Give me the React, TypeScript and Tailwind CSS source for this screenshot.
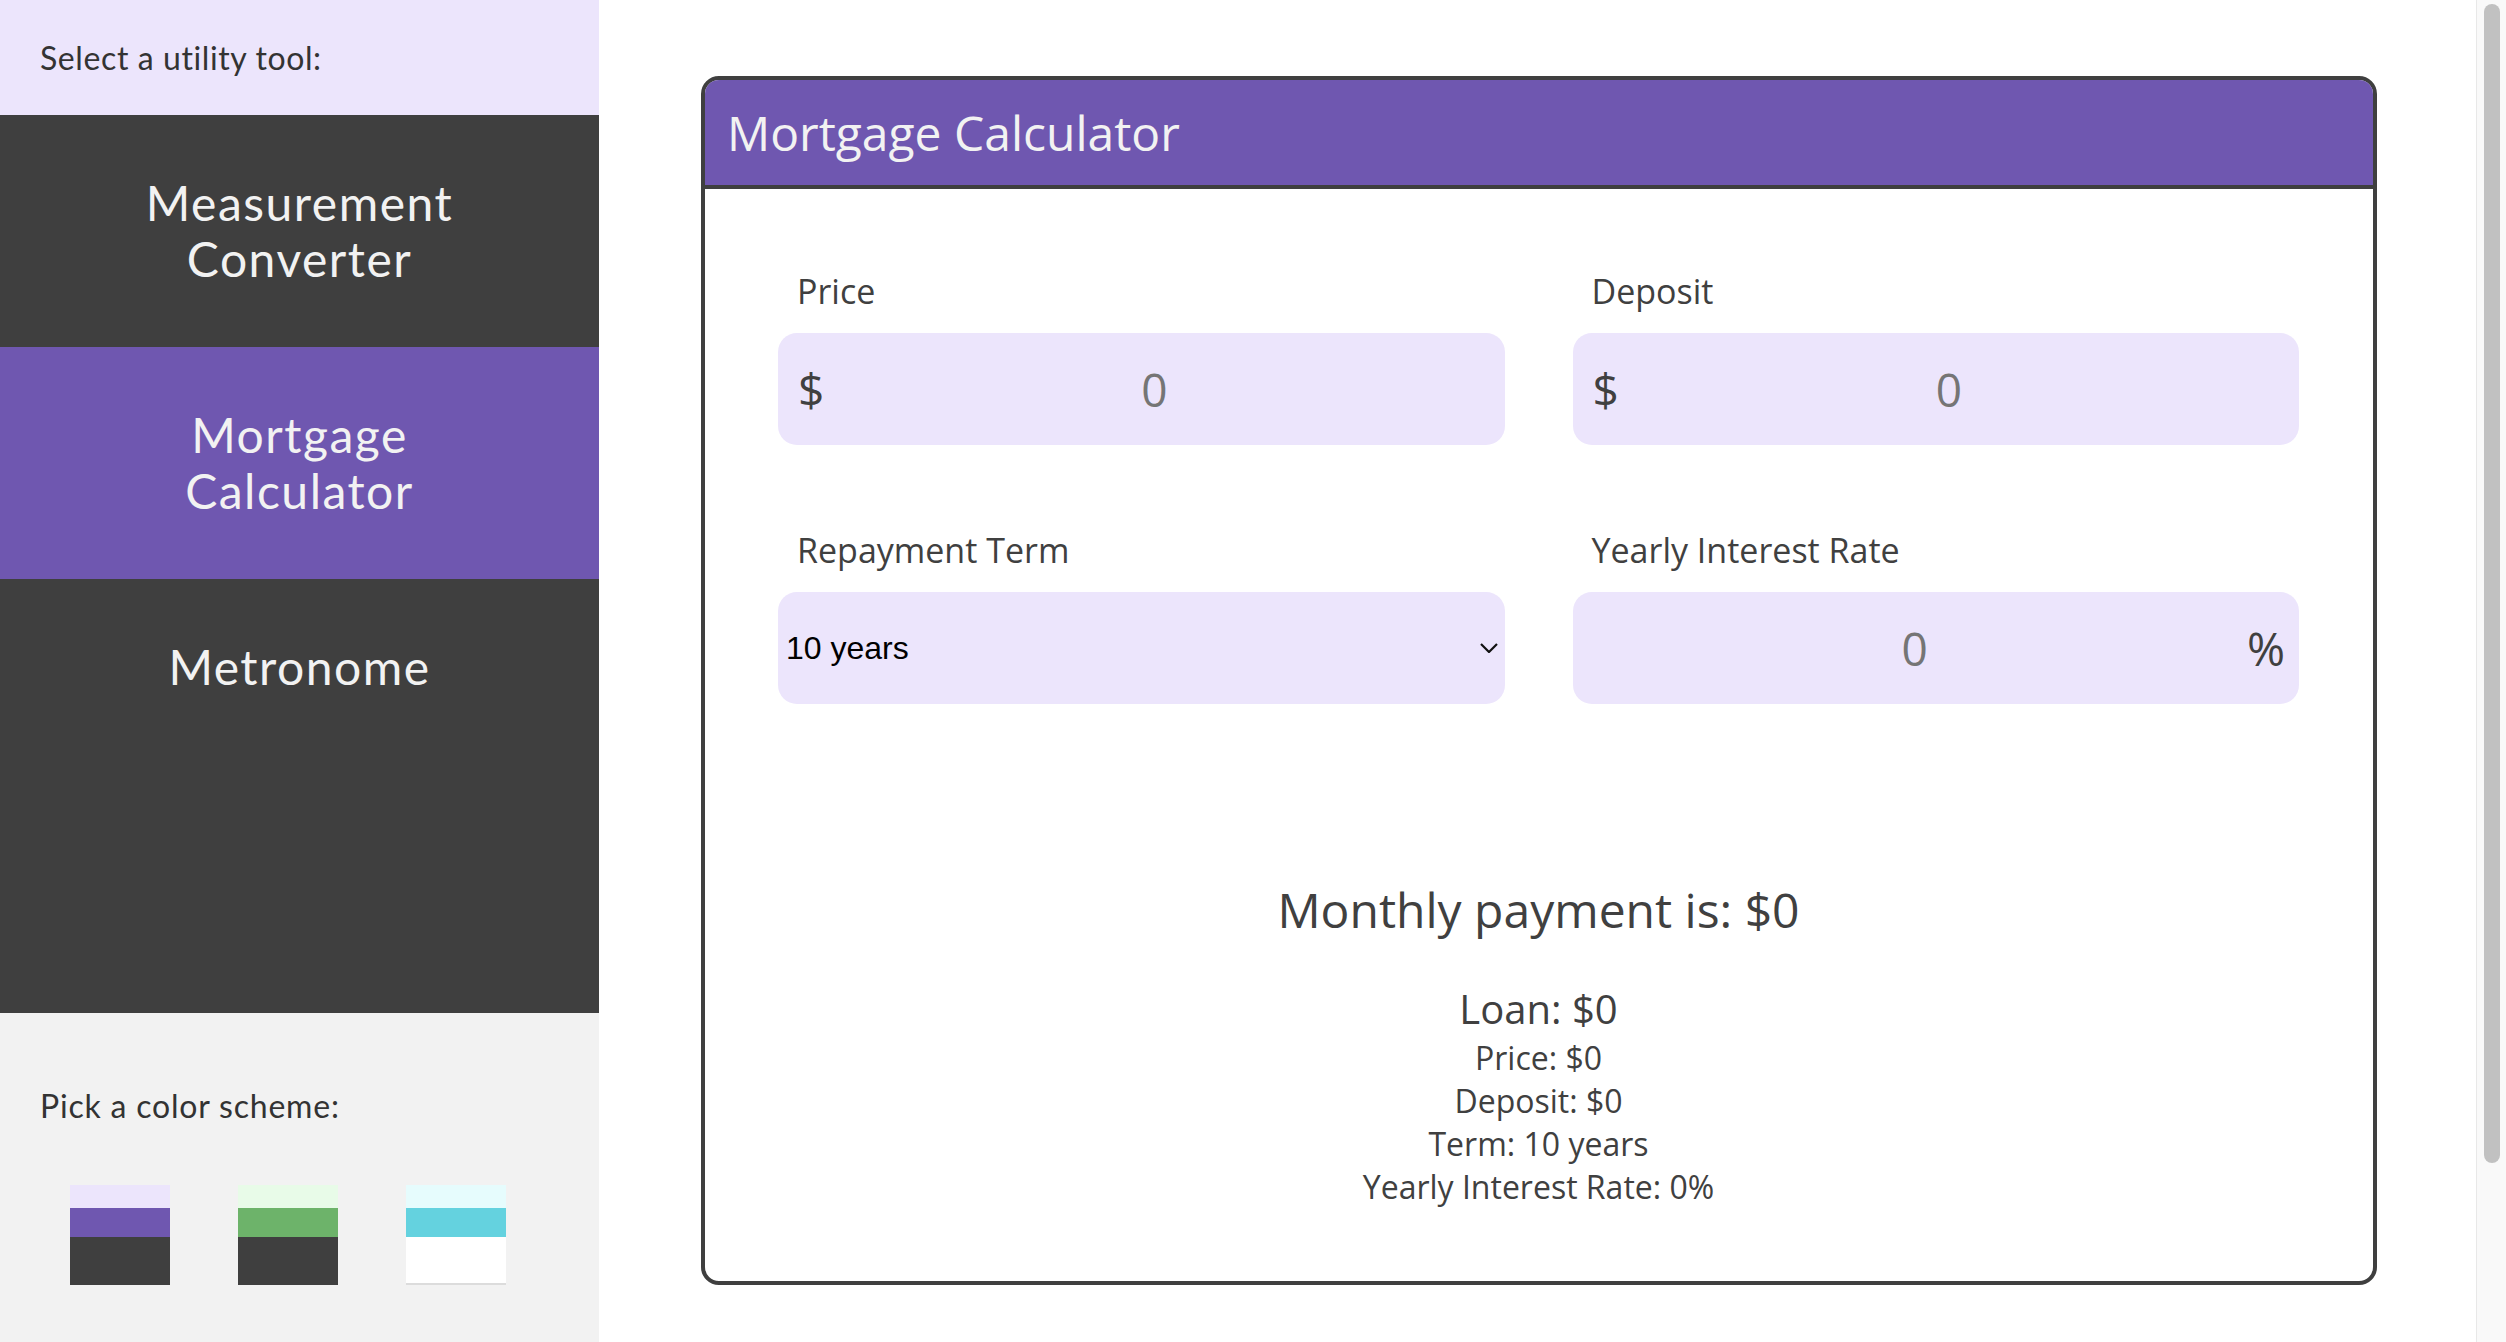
import { useState } from 'react';
import clsx from 'clsx';

const tools = [
  { id: 'converter', lines: ['Measurement', 'Converter'] },
  { id: 'mortgage', lines: ['Mortgage', 'Calculator'] },
  { id: 'metronome', lines: ['Metronome'] },
];

const schemes = [
  { id: 'purple', top: 'bg-[#ece5fc]', mid: 'bg-[#6f57b0]', base: 'bg-[#3f3f3f]' },
  { id: 'green', top: 'bg-[#e8fbe8]', mid: 'bg-[#6db36a]', base: 'bg-[#3f3f3f]' },
  { id: 'cyan', top: 'bg-[#e6fcfd]', mid: 'bg-[#64d2df]', base: 'bg-white border-b-2 border-[#dcdcdc]' },
];

const terms = [10, 15, 20, 25, 30];

function Sidebar({ active, onSelect }: { active: string; onSelect: (id: string) => void }) {
  return (
    <aside className="flex w-[599px] shrink-0 flex-col font-[Lato,sans-serif]">
      <div className="flex h-[115px] shrink-0 items-center bg-[#ece5fc] px-[40px] text-[32px] tracking-[0.6px] text-[#333]">
        Select a utility tool:
      </div>
      <nav className="flex-1 bg-[#3f3f3f]">
        {tools.map((tool) => (
          <button
            key={tool.id}
            type="button"
            onClick={() => onSelect(tool.id)}
            className={clsx(
              'block w-full py-[60px] text-center text-[48px] leading-[56px] tracking-[1.5px] text-[#f2f2f2]',
              active === tool.id && 'bg-[#6f57b0]',
            )}
          >
            {tool.lines.map((line) => (
              <span key={line} className="block">
                {line}
              </span>
            ))}
          </button>
        ))}
      </nav>
      <div className="h-[329px] shrink-0 bg-[#f2f2f2] px-[40px] pt-[73px]">
        <p className="text-[32px] leading-[40px] tracking-[0.8px] text-[#333]">Pick a color scheme:</p>
        <div className="mt-[59px] flex gap-[68px] pl-[30px]">
          {schemes.map((s) => (
            <button key={s.id} type="button" className="flex h-[100px] w-[100px] flex-col">
              <span className={clsx('h-[23px]', s.top)} />
              <span className={clsx('h-[29px]', s.mid)} />
              <span className={clsx('flex-1', s.base)} />
            </button>
          ))}
        </div>
      </div>
    </aside>
  );
}

function Field({ label, children }: { label: string; children: React.ReactNode }) {
  return (
    <div>
      <p className="mb-[19px] pl-[19px] text-[34px] leading-[46px]">{label}</p>
      <div className="relative flex h-[112px] items-center rounded-[19px] bg-[#ece5fc]">{children}</div>
    </div>
  );
}

function MortgageCalculator() {
  const [price, setPrice] = useState('0');
  const [deposit, setDeposit] = useState('0');
  const [term, setTerm] = useState(10);
  const [rate, setRate] = useState('0');

  const p = Number(price) || 0;
  const d = Number(deposit) || 0;
  const r = Number(rate) || 0;
  const loan = Math.max(p - d, 0);
  const n = term * 12;
  const mr = r / 100 / 12;
  const monthly = loan === 0 ? 0 : mr === 0 ? loan / n : (loan * mr) / (1 - Math.pow(1 + mr, -n));

  return (
    <section className="overflow-hidden rounded-[18px] border-4 border-[#3f3f3f] font-['Open_Sans',sans-serif] text-[#404040]">
      <header className="flex h-[109px] items-center border-b-4 border-[#3f3f3f] bg-[#6f57b0] pl-[22px] text-[48px] text-[#f2f2f2]">
        Mortgage Calculator
      </header>
      <div className="pl-[73px] pr-[74px] pt-[79px] pb-[73px]">
        <div className="grid grid-cols-2 gap-x-[68px] gap-y-[82px]">
          <Field label="Price">
            <span className="pl-[20px] text-[46px]">$</span>
            <input
              value={price}
              onChange={(e) => setPrice(e.target.value)}
              className="min-w-0 flex-1 bg-transparent pr-[20px] text-center text-[46px] text-[#757575] outline-none"
            />
          </Field>
          <Field label="Deposit">
            <span className="pl-[20px] text-[46px]">$</span>
            <input
              value={deposit}
              onChange={(e) => setDeposit(e.target.value)}
              className="min-w-0 flex-1 bg-transparent pr-[20px] text-center text-[46px] text-[#757575] outline-none"
            />
          </Field>
          <Field label="Repayment Term">
            <select
              value={term}
              onChange={(e) => setTerm(Number(e.target.value))}
              className="h-full w-full appearance-none bg-transparent pl-[8px] font-['Liberation_Sans',Arial,sans-serif] text-[32px] text-black outline-none"
            >
              {terms.map((t) => (
                <option key={t} value={t}>
                  {t} years
                </option>
              ))}
            </select>
            <svg
              className="pointer-events-none absolute right-[7px] top-[51px] h-[10px] w-[18px]"
              viewBox="0 0 18 10"
              fill="none"
            >
              <path d="M1 1l8 8 8-8" stroke="#111" strokeWidth="2.2" />
            </svg>
          </Field>
          <Field label="Yearly Interest Rate">
            <input
              value={rate}
              onChange={(e) => setRate(e.target.value)}
              className="min-w-0 flex-1 bg-transparent pl-[10px] text-center text-[46px] text-[#757575] outline-none"
            />
            <span className="pr-[14px] text-[46px]">%</span>
          </Field>
        </div>

        <div className="mt-[173px] text-center">
          <p className="text-[48px] leading-[65px]">Monthly payment is: ${Math.round(monthly)}</p>
          <p className="mt-[40px] text-[40px] leading-[54px]">Loan: ${loan}</p>
          <div className="text-[32px] leading-[43px]">
            <p>Price: ${p}</p>
            <p>Deposit: ${d}</p>
            <p>Term: {term} years</p>
            <p>Yearly Interest Rate: {r}%</p>
          </div>
        </div>
      </div>
    </section>
  );
}

export default function App() {
  const [active, setActive] = useState('mortgage');

  return (
    <div className="flex h-[1342px] w-full overflow-hidden bg-white">
      <Sidebar active={active} onSelect={setActive} />
      <main className="flex-1 pl-[102px] pr-[99px] pt-[76px]">
        <MortgageCalculator />
      </main>
      <div className="w-[30px] shrink-0 border-l border-[#e8e8e8] bg-[#f9f9f9] pl-[7px] pt-[4px]">
        <div className="h-[1159px] w-[16px] rounded-full bg-[#c1c1c1]" />
      </div>
    </div>
  );
}
